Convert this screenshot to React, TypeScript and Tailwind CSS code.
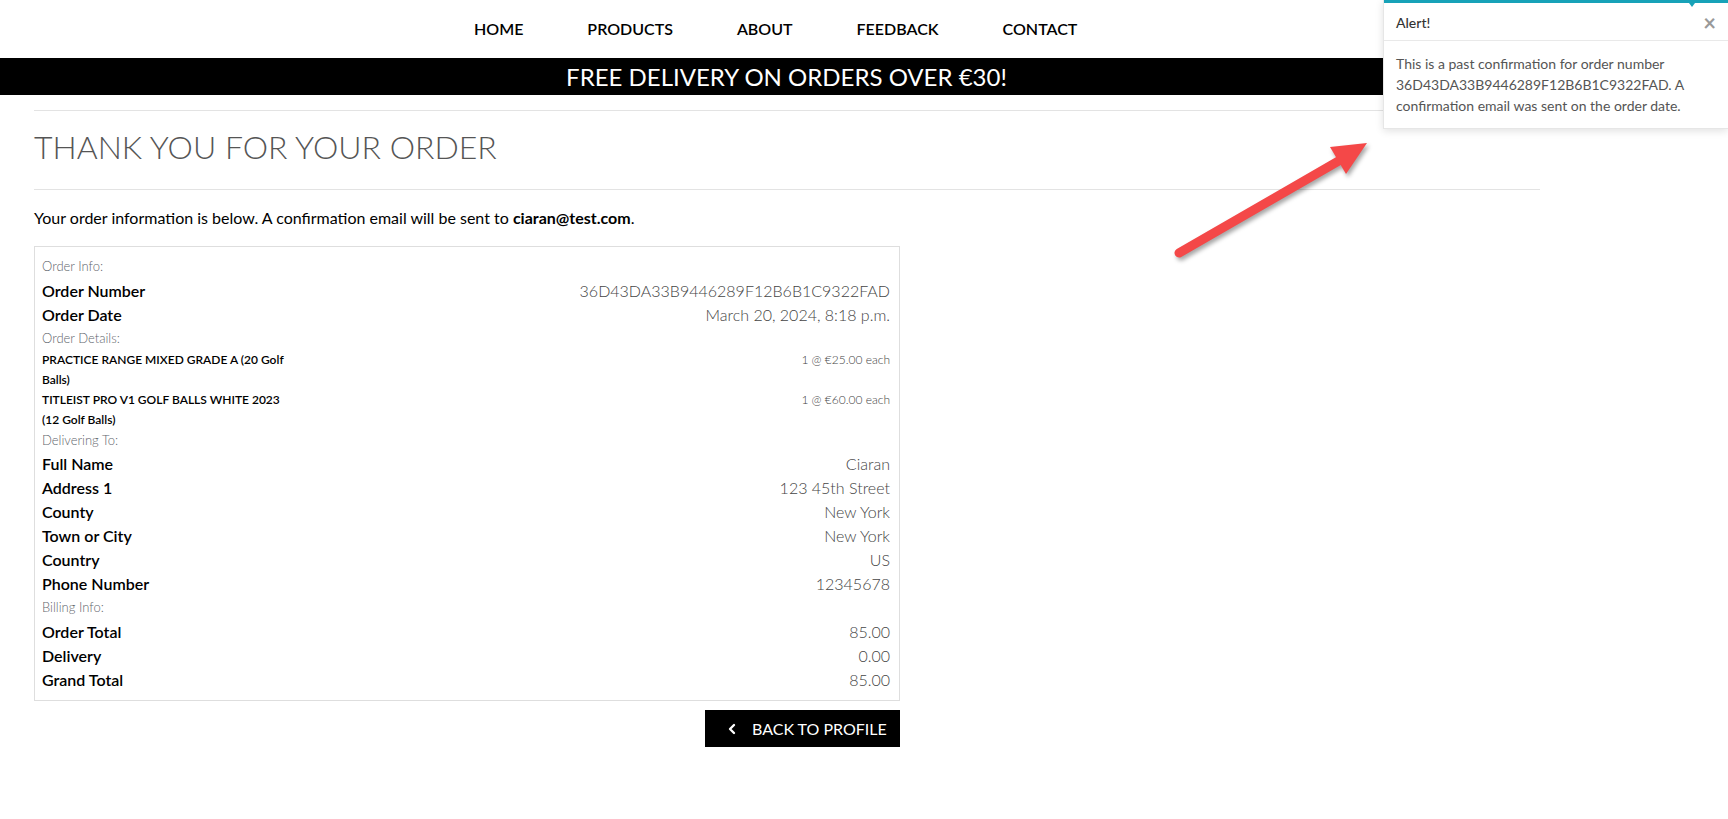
import React from "react";
import { ChevronLeft } from "lucide-react";

const NAV = ["HOME", "PRODUCTS", "ABOUT", "FEEDBACK", "CONTACT"];

type RowProps = { label: string; value: string };

const SectionLabel = ({ children, h = "h-6" }: { children: React.ReactNode; h?: string }) => (
  <div className={`${h} flex items-center text-[13px] font-light text-[#5f666d]`}>{children}</div>
);

const Row = ({ label, value }: RowProps) => (
  <div className="h-6 flex items-center justify-between">
    <span className="text-base font-semibold text-black">{label}</span>
    <span className="text-base font-light text-[#444]">{value}</span>
  </div>
);

const ItemRow = ({ name, qty }: { name: React.ReactNode; qty: string }) => (
  <div className="flex justify-between items-start">
    <span className="w-[262px] text-xs leading-5 font-semibold text-black">{name}</span>
    <span className="text-xs leading-5 font-light text-[#444]">{qty}</span>
  </div>
);

export default function App() {
  return (
    <div className="relative min-h-screen overflow-hidden bg-white font-[Lato,'Open_Sans',sans-serif]">
      <header className="h-[58px] flex items-center pl-[474px] gap-16">
        {NAV.map((n) => (
          <a key={n} href="#" className="text-base font-semibold text-black">
            {n}
          </a>
        ))}
      </header>
      <div className="h-[37px] bg-black flex items-center justify-center pr-[155px]">
        <span className="text-[24px] leading-[37px] text-white">FREE DELIVERY ON ORDERS OVER €30!</span>
      </div>

      <main className="ml-[34px] w-[1506px] mt-[15px]">
        <hr className="border-t border-[#e3e3e3]" />
        <h1 className="mt-4 text-[32px] leading-10 font-light text-[#555]">THANK YOU FOR YOUR ORDER</h1>
        <hr className="mt-[22px] border-t border-[#e3e3e3]" />
        <p className="mt-4 text-base leading-6 text-black">
          Your order information is below. A confirmation email will be sent to{" "}
          <strong className="font-bold">ciaran@test.com</strong>.
        </p>

        <div className="w-[866px] mt-4 flex flex-col">
          <div className="border border-[#dedede] pl-[7px] pr-[9px] pt-2 pb-2">
            <SectionLabel>Order Info:</SectionLabel>
            <Row label="Order Number" value="36D43DA33B9446289F12B6B1C9322FAD" />
            <Row label="Order Date" value="March 20, 2024, 8:18 p.m." />
            <SectionLabel h="h-[23px]">Order Details:</SectionLabel>
            <ItemRow name="PRACTICE RANGE MIXED GRADE A (20 Golf Balls)" qty="1 @ €25.00 each" />
            <ItemRow
              name={
                <>
                  TITLEIST PRO V1 GOLF BALLS WHITE 2023
                  <br />
                  (12 Golf Balls)
                </>
              }
              qty="1 @ €60.00 each"
            />
            <SectionLabel h="h-[22px]">Delivering To:</SectionLabel>
            <Row label="Full Name" value="Ciaran" />
            <Row label="Address 1" value="123 45th Street" />
            <Row label="County" value="New York" />
            <Row label="Town or City" value="New York" />
            <Row label="Country" value="US" />
            <Row label="Phone Number" value="12345678" />
            <SectionLabel>Billing Info:</SectionLabel>
            <Row label="Order Total" value="85.00" />
            <Row label="Delivery" value="0.00" />
            <Row label="Grand Total" value="85.00" />
          </div>
          <a
            href="#"
            className="self-end mt-[9px] w-[195px] h-[37px] bg-black text-white flex items-center pl-[19px] gap-[12px]"
          >
            <ChevronLeft size={16} strokeWidth={3.5} />
            <span className="text-base">BACK TO PROFILE</span>
          </a>
        </div>
      </main>

      {/* red arrow pointing at the alert */}
      <svg
        className="absolute left-[1160px] top-[130px] drop-shadow-[2px_3px_2px_rgba(0,0,0,0.35)]"
        width="220"
        height="140"
        viewBox="0 0 220 140"
      >
        <line x1="19" y1="123" x2="182" y2="29" stroke="#f44848" strokeWidth="9" strokeLinecap="round" />
        <polygon points="207,13 186,44 170,17" fill="#f44848" />
      </svg>

      {/* toast */}
      <div className="absolute top-0 right-0 w-[345px] bg-white border-l border-b border-[#e6e6e6] shadow-[0_2px_8px_rgba(0,0,0,0.12)]">
        <div className="relative h-[3px] bg-[#17a2b8]">
          <span className="absolute left-[305px] top-[3px] w-0 h-0 border-l-[3px] border-r-[3px] border-t-[4px] border-l-transparent border-r-transparent border-t-[#17a2b8]" />
        </div>
        <div className="h-[38px] px-3 pt-[3px] flex items-center justify-between border-b border-[#e9e9e9]">
          <span className="text-sm font-medium text-[#333]">Alert!</span>
          <span className="text-[22px] leading-none text-[#999] font-bold">×</span>
        </div>
        <div className="p-3 text-sm leading-[21px] text-[#555]">
          This is a past confirmation for order number 36D43DA33B9446289F12B6B1C9322FAD. A confirmation email was
          sent on the order date.
        </div>
      </div>
    </div>
  );
}
